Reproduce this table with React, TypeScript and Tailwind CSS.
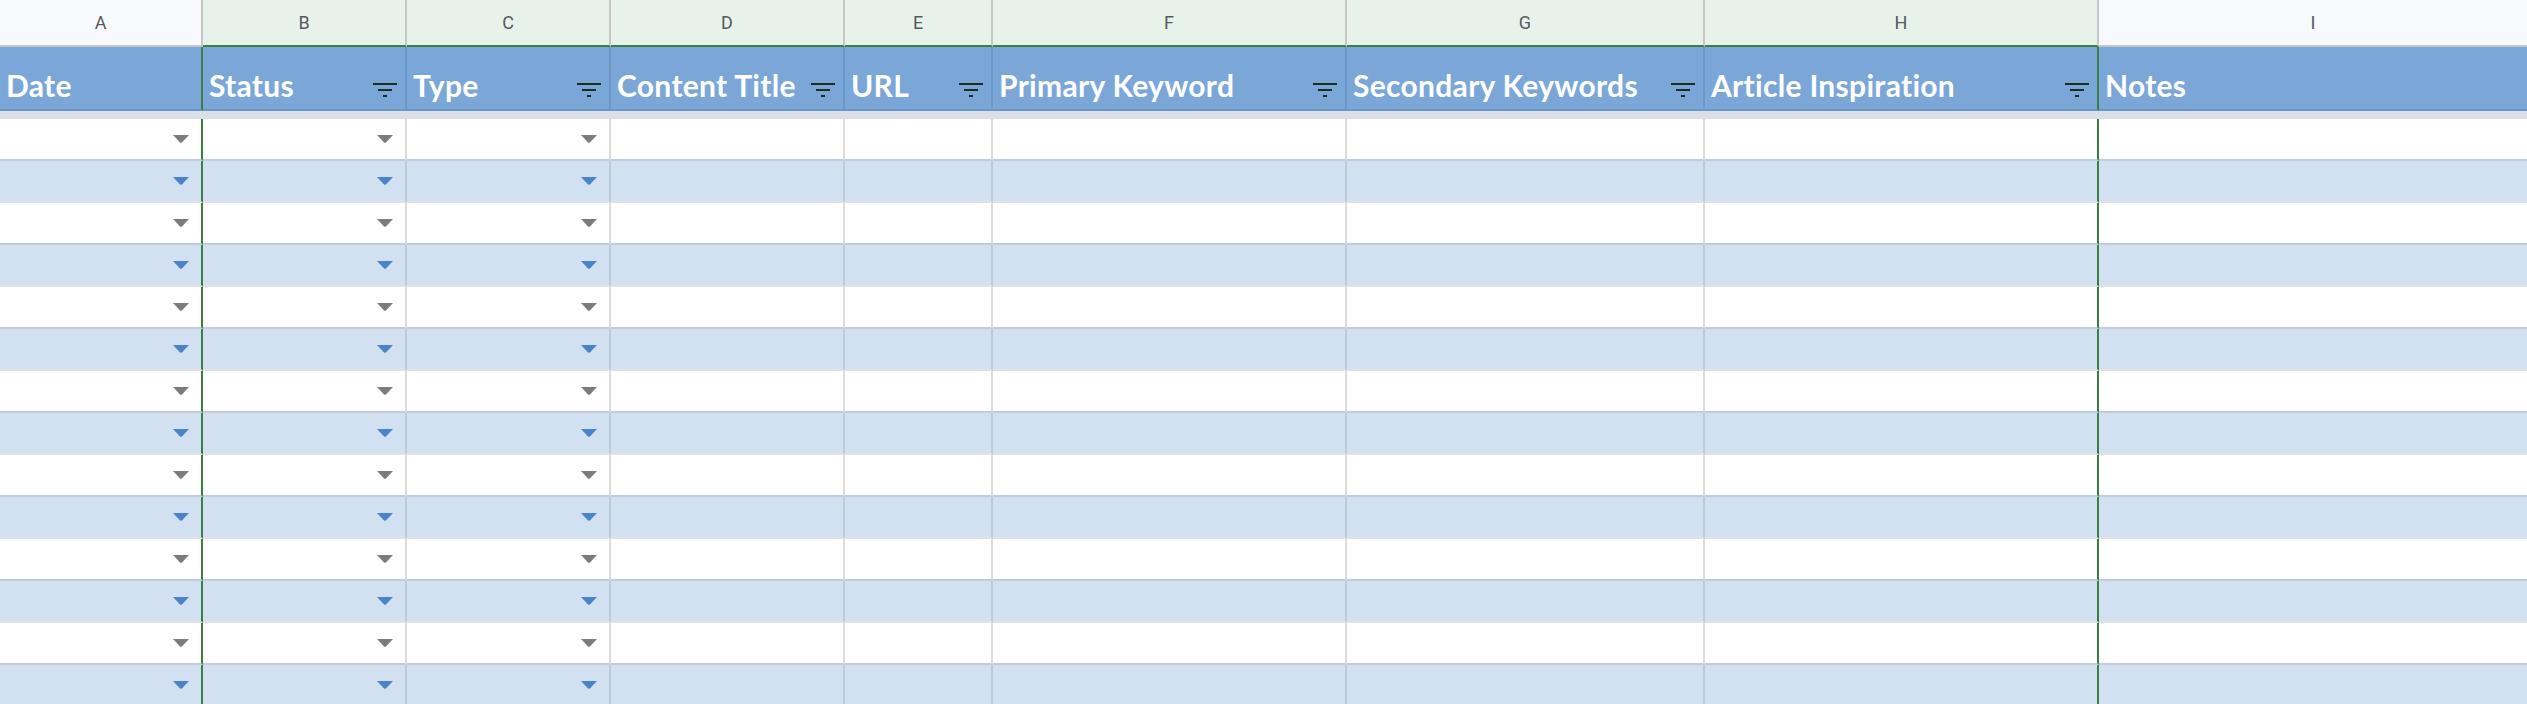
import React from "react";

interface Column {
  letter: string;
  title: string;
  width: string;
  filter: boolean;
  dropdown: boolean;
  selected: boolean;
}

const columns: Column[] = [
  { letter: "A", title: "Date", width: "w-[203px]", filter: false, dropdown: true, selected: false },
  { letter: "B", title: "Status", width: "w-[204px]", filter: true, dropdown: true, selected: true },
  { letter: "C", title: "Type", width: "w-[204px]", filter: true, dropdown: true, selected: true },
  { letter: "D", title: "Content Title", width: "w-[234px]", filter: true, dropdown: false, selected: true },
  { letter: "E", title: "URL", width: "w-[148px]", filter: true, dropdown: false, selected: true },
  { letter: "F", title: "Primary Keyword", width: "w-[354px]", filter: true, dropdown: false, selected: true },
  { letter: "G", title: "Secondary Keywords", width: "w-[358px]", filter: true, dropdown: false, selected: true },
  { letter: "H", title: "Article Inspiration", width: "w-[394px]", filter: true, dropdown: false, selected: true },
  { letter: "I", title: "Notes", width: "flex-1", filter: false, dropdown: false, selected: false },
];

const ROWS = 14;

function FilterIcon() {
  return (
    <svg width="24" height="14" viewBox="0 0 24 14" className="mb-[12px] shrink-0">
      <rect x="0" y="0" width="24" height="2" fill="#1b2e1e" />
      <rect x="5" y="6" width="14" height="2" fill="#1b2e1e" />
      <rect x="10" y="12" width="4" height="2" fill="#1b2e1e" />
    </svg>
  );
}

function Caret({ color }: { color: string }) {
  return (
    <svg width="16" height="8" viewBox="0 0 16 8" className="shrink-0">
      <path d="M0 0 H16 L9 7.4 Q8 8.2 7 7.4 Z" fill={color} />
    </svg>
  );
}

// right border of a cell: green where the B:H selection edge sits
function edge(i: number, normal: string) {
  if (i === 0 || i === 7) return "border-r-[#3b7f42]";
  return normal;
}

export default function App() {
  return (
    <div className="w-[2527px] h-[704px] overflow-hidden bg-white font-['Lato','Liberation_Sans',sans-serif]">
      {/* column letters */}
      <div className="flex">
        {columns.map((c, i) => (
          <div
            key={c.letter}
            className={`${c.width} h-[47px] flex items-center justify-center border-b-2 font-['Roboto','Liberation_Sans',sans-serif] text-[18px] text-[#575a5d] ${
              c.selected ? "bg-[#e7f2ea] border-b-[#3b7f42]" : "bg-[#f8f9fa] border-b-[#c4c7c5]"
            } ${i < 8 ? "border-r-2 border-r-[#c4c7c5]" : ""}`}
          >
            {c.letter}
          </div>
        ))}
      </div>

      {/* header row */}
      <div className="flex">
        {columns.map((c, i) => (
          <div
            key={c.letter}
            className={`${c.width} h-[64px] flex items-end justify-between pl-[6px] pr-[8px] bg-[#7ba7d8] border-b-2 border-b-[#6b96c8] ${
              i < 8 ? `border-r-2 ${edge(i, "border-r-[#6c98c9]")}` : ""
            }`}
          >
            <span className="text-[30px] leading-[30px] tracking-[0.3px] pb-[9px] font-bold text-white whitespace-nowrap">
              {c.title}
            </span>
            {c.filter && <FilterIcon />}
          </div>
        ))}
      </div>

      {/* frozen row divider */}
      <div className="h-[8px] bg-[#dadfe8]" />

      {/* data rows */}
      {Array.from({ length: ROWS }).map((_, r) => {
        const banded = r % 2 === 1;
        return (
          <div key={r} className="flex">
            {columns.map((c, i) => (
              <div
                key={c.letter}
                className={`${c.width} h-[42px] flex items-center justify-end pr-[12px] border-b-2 ${
                  banded ? "bg-[#d1e1f1] border-b-[#e1e1e1]" : "bg-white border-b-[#c0ccda]"
                } ${
                  i < 8
                    ? `border-r-2 ${edge(i, banded ? "border-r-[#bfcbd9]" : "border-r-[#dcdcdc]")}`
                    : ""
                }`}
              >
                {c.dropdown && <Caret color={banded ? "#4a83c7" : "#7c7c7c"} />}
              </div>
            ))}
          </div>
        );
      })}
    </div>
  );
}
